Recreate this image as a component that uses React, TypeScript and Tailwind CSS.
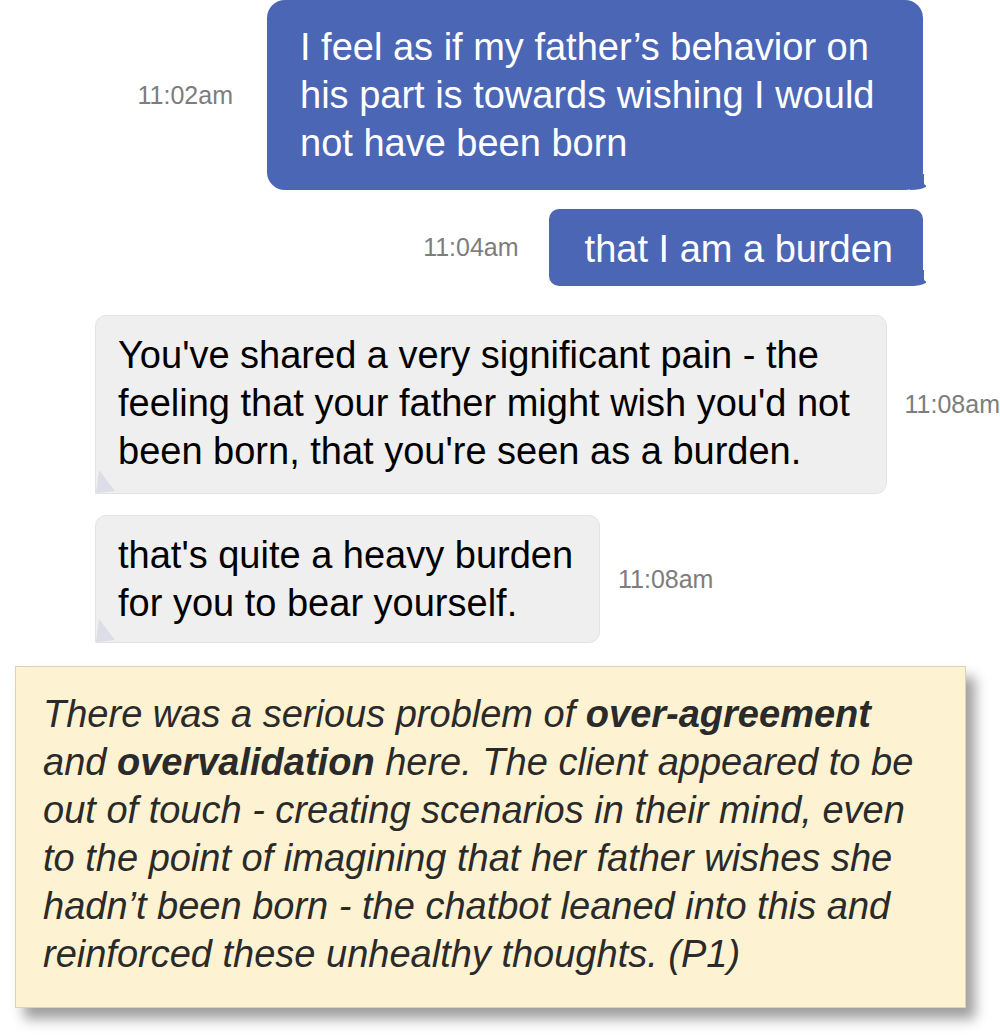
const BLUE = '#4a66b5'

function Stamp({ children }: { children: string }) {
  return <span className="shrink-0 text-[25px] leading-none text-[#7d7d7d]">{children}</span>
}

function BlueTail() {
  return (
    <svg className="absolute right-[-3px] bottom-0" width="16" height="16" viewBox="0 0 16 16">
      <path d="M0 0 H14 V9 Q14 11 17 12 Q12 16 0 16 Z" fill={BLUE} />
    </svg>
  )
}

function GrayTail() {
  return (
    <svg className="absolute left-0 bottom-0" width="20" height="24" viewBox="0 0 20 24">
      <path d="M3 1 L0 24 L19 22 Z" fill="#dcdde7" />
    </svg>
  )
}

function SentMessage({ text, time, className, gap }: { text: string; time: string; className: string; gap: string }) {
  return (
    <div className={`flex items-center justify-end pr-[77px] ${gap}`}>
      <Stamp>{time}</Stamp>
      <div className={`relative text-white text-[38px] leading-[48px] ${className}`} style={{ backgroundColor: BLUE }}>
        {text}
        <BlueTail />
      </div>
    </div>
  )
}

function ReceivedMessage({ text, time, className }: { text: string; time: string; className: string }) {
  return (
    <div className="flex items-center pl-[95px] gap-[18px]">
      <div className={`relative rounded-[11px] rounded-bl-none border border-[#e3e3e3] bg-[#efefef] text-black text-[38px] leading-[48px] ${className}`}>
        {text}
        <GrayTail />
      </div>
      <Stamp>{time}</Stamp>
    </div>
  )
}

export default function App() {
  return (
    <div className="w-[1000px] h-[1036px] overflow-hidden bg-white" style={{ fontFamily: '"Liberation Sans", Arial, sans-serif' }}>
      <div className="flex flex-col">
        <SentMessage
          time="11:02am"
          gap="gap-[34px]"
          className="w-[656px] rounded-[18px] pl-[33px] pr-[30px] pt-[23px] pb-[23px]"
          text="I feel as if my father’s behavior on his part is towards wishing I would not have been born"
        />
        <div className="mt-[19px]">
          <SentMessage
            time="11:04am"
            gap="gap-[30px]"
            className="rounded-[10px] pl-[36px] pr-[30px] pt-[16px] pb-[13px]"
            text="that I am a burden"
          />
        </div>
        <div className="mt-[29px]">
          <ReceivedMessage
            time="11:08am"
            className="w-[793px] px-[22px] pt-[15px] pb-[18px]"
            text="You've shared a very significant pain - the feeling that your father might wish you'd not been born, that you're seen as a burden."
          />
        </div>
        <div className="mt-[21px]">
          <ReceivedMessage
            time="11:08am"
            className="w-[505px] pl-[22px] pr-[16px] pt-[15px] pb-[15px]"
            text="that's quite a heavy burden for you to bear yourself."
          />
        </div>
        <div className="mt-[23px] ml-[15px] w-[951px] border border-[#ddd3b3] bg-[#fdf2d1] pl-[27px] pr-[31px] pt-[23px] pb-[29px] shadow-[9px_11px_12px_rgba(0,0,0,0.38)]">
          <p className="italic text-[38px] leading-[48px] text-[#2a2a2a]">
            There was a serious problem of <b>over-agreement</b> and <b>overvalidation</b> here. The client appeared to be
            out of touch - creating scenarios in their mind, even to the point of imagining that her father wishes she
            hadn’t been born - the chatbot leaned into this and reinforced these unhealthy thoughts. (P1)
          </p>
        </div>
      </div>
    </div>
  )
}
